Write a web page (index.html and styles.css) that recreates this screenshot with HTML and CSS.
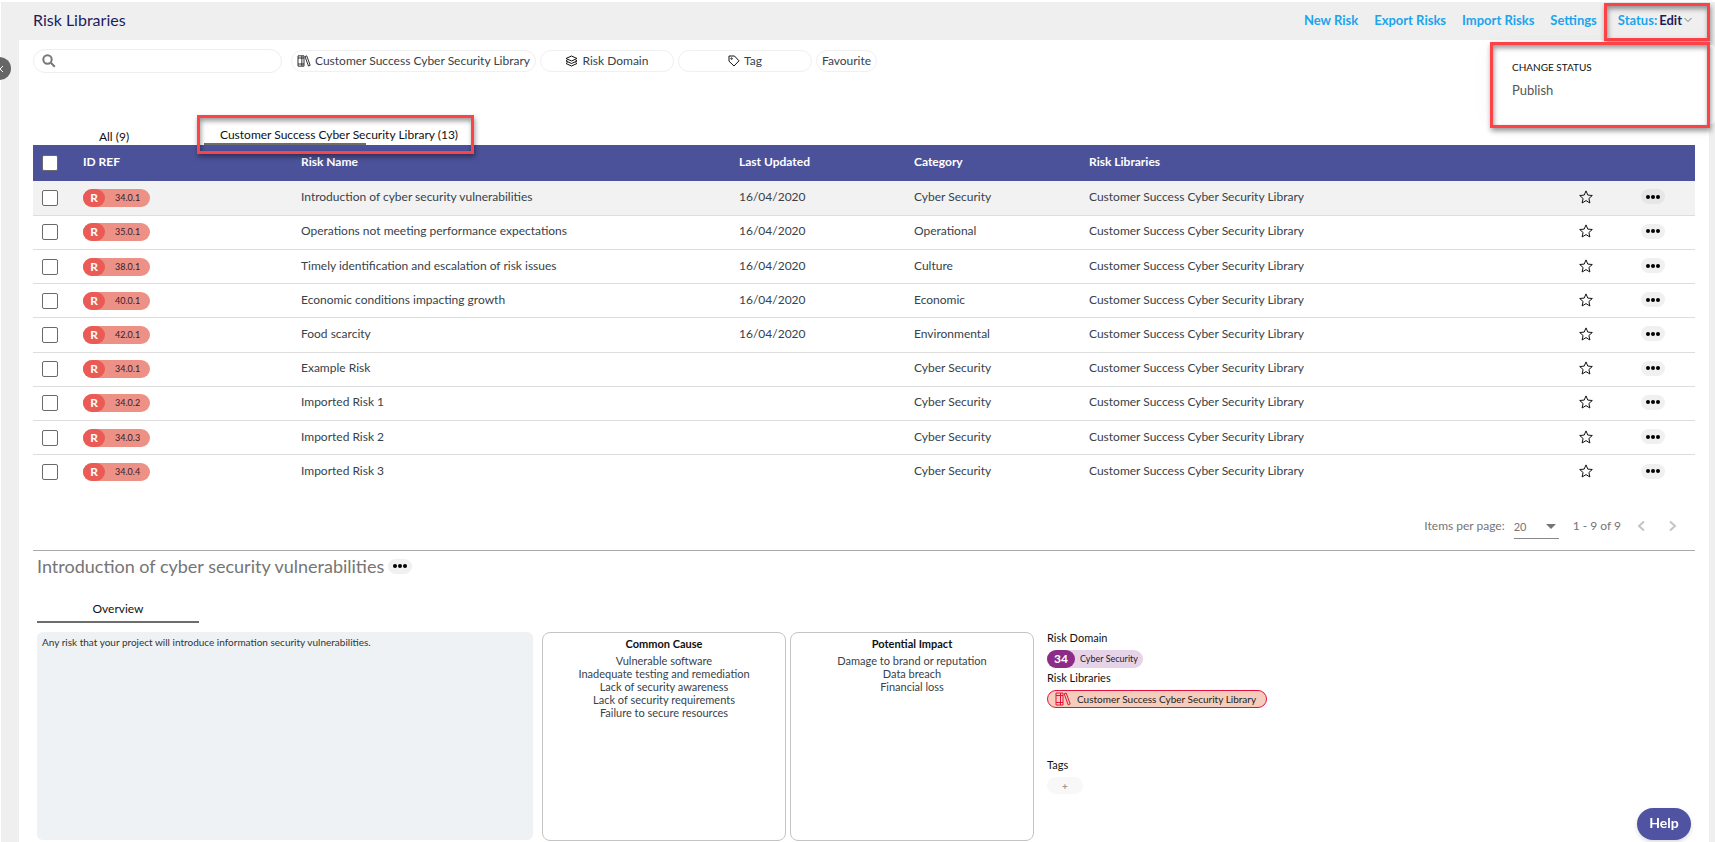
FILE: index.html
```
<!DOCTYPE html>
<html lang="en">
<head>
    <meta charset="UTF-8">
    <meta name="viewport" content="width=device-width, initial-scale=1.0">
    <title>Risk Libraries</title>
    <link rel="stylesheet" href="styles.css">
</head>
<body>
    <!-- shared icons -->
    <svg class="sprite" aria-hidden="true">
        <symbol id="icon-books" viewBox="0 0 16 14">
            <path d="M1 1h7v12H1zM5.5 1v12M1 3.5h7M1 10.5h7M9.2 1.8l2-.8 4 11-2 .9z" />
        </symbol>
        <symbol id="icon-star" viewBox="0 0 14 14">
            <path d="M7 .9l1.8 4.2 4.5.4-3.4 3 1 4.5L7 10.6 3.1 13l1-4.5-3.4-3 4.5-.4z" />
        </symbol>
        <symbol id="icon-dots" viewBox="0 0 14 4">
            <circle cx="2" cy="2" r="2" /><circle cx="7" cy="2" r="2" /><circle cx="12" cy="2" r="2" />
        </symbol>
    </svg>

    <button class="collapse-button" aria-label="Collapse menu">
        <svg width="6" height="8" viewBox="0 0 6 8"><path d="M5 1L2 4l3 3" /></svg>
    </button>

    <header class="topbar">
        <h1>Risk Libraries</h1>
        <nav class="actions">
            <a href="#">New Risk</a>
            <a href="#">Export Risks</a>
            <a href="#">Import Risks</a>
            <a href="#">Settings</a>
            <div class="status">
                <button class="status-button">Status: <span>Edit</span>
                    <svg width="8" height="6" viewBox="0 0 8 6"><path d="M.5 1L4 4.500 7.500 1" /></svg>
                </button>
                <div class="status-highlight"></div>
                <div class="status-menu">
                    <h2>Change status</h2>
                    <button>Publish</button>
                </div>
                <div class="menu-highlight"></div>
            </div>
        </nav>
    </header>

    <main class="page">
        <div class="filters">
            <label class="search">
                <svg width="14" height="14" viewBox="0 0 14 14"><circle cx="5.500" cy="5.500" r="4.200" /><path d="M8.800 8.800l4 4" /></svg>
                <input type="text" aria-label="Search">
            </label>
            <button class="chip"><svg class="line-icon" width="14" height="12"><use href="#icon-books" /></svg>Customer Success Cyber Security Library</button>
            <button class="chip chip-wide">
                <svg class="line-icon" width="13" height="12" viewBox="0 0 13 12"><path d="M6.500 1L12 3.500 6.500 6 1 3.500zM2.500 5L1 6l5.500 2.500L12 6l-1.500-1M2.500 7.500L1 8.500 6.500 11 12 8.500l-1.500-1" /></svg>Risk Domain
            </button>
            <button class="chip chip-wide">
                <svg class="line-icon" width="12" height="12" viewBox="0 0 12 12"><path d="M1 1h5.500L11 5.800 6 11 1 6.200z" /><circle cx="3.600" cy="3.600" r=".7" /></svg>Tag
            </button>
            <button class="chip">Favourite</button>
        </div>

        <div class="tabs">
            <button class="tab">All (9)</button>
            <button class="tab tab-active">Customer Success Cyber Security Library (13)<span class="tab-highlight"></span></button>
        </div>

        <table class="risks">
            <colgroup>
                <col class="col-check">
                <col class="col-id">
                <col class="col-name">
                <col class="col-date">
                <col class="col-date">
                <col>
                <col class="col-star">
                <col class="col-menu">
            </colgroup>
            <thead>
                <tr>
                    <th><input type="checkbox" aria-label="Select all"></th>
                    <th>ID REF</th>
                    <th>Risk Name</th>
                    <th>Last Updated</th>
                    <th>Category</th>
                    <th>Risk Libraries</th>
                    <th></th>
                    <th></th>
                </tr>
            </thead>
            <tbody id="riskRows"></tbody>
        </table>

        <div class="paginator">
            <label for="pageSize">Items per page:</label>
            <div class="page-size">
                <select id="pageSize"><option>20</option></select>
            </div>
            <span>1 - 9 of 9</span>
            <button aria-label="Previous page"><svg width="8" height="12" viewBox="0 0 8 12"><path d="M7 1.500L2 6l5 4.500" /></svg></button>
            <button aria-label="Next page"><svg width="8" height="12" viewBox="0 0 8 12"><path d="M1 1.500L6 6l-5 4.500" /></svg></button>
        </div>

        <section class="detail">
            <div class="detail-title">
                <h2>Introduction of cyber security vulnerabilities</h2>
                <button class="dots" aria-label="More"><svg width="14" height="4"><use href="#icon-dots" /></svg></button>
            </div>
            <button class="overview-tab">Overview</button>
            <div class="panels">
                <div class="description">Any risk that your project will introduce information security vulnerabilities.</div>
                <div class="panel">
                    <h3>Common Cause</h3>
                    <ul>
                        <li>Vulnerable software</li>
                        <li>Inadequate testing and remediation</li>
                        <li>Lack of security awareness</li>
                        <li>Lack of security requirements</li>
                        <li>Failure to secure resources</li>
                    </ul>
                </div>
                <div class="panel">
                    <h3>Potential Impact</h3>
                    <ul>
                        <li>Damage to brand or reputation</li>
                        <li>Data breach</li>
                        <li>Financial loss</li>
                    </ul>
                </div>
                <div class="meta">
                    <h4>Risk Domain</h4>
                    <div class="domain"><b>34</b>Cyber Security</div>
                    <h4>Risk Libraries</h4>
                    <div class="library"><svg class="line-icon" width="16" height="14"><use href="#icon-books" /></svg>Customer Success Cyber Security Library</div>
                    <h4 class="tags-title">Tags</h4>
                    <button class="add-tag" aria-label="Add tag">+</button>
                </div>
            </div>
        </section>
    </main>

    <button class="help-button">Help</button>

    <script>
        const library = 'Customer Success Cyber Security Library';
        const risks = [
            ['34.0.1', 'Introduction of cyber security vulnerabilities', '16/04/2020', 'Cyber Security'],
            ['35.0.1', 'Operations not meeting performance expectations', '16/04/2020', 'Operational'],
            ['38.0.1', 'Timely identification and escalation of risk issues', '16/04/2020', 'Culture'],
            ['40.0.1', 'Economic conditions impacting growth', '16/04/2020', 'Economic'],
            ['42.0.1', 'Food scarcity', '16/04/2020', 'Environmental'],
            ['34.0.1', 'Example Risk', '', 'Cyber Security'],
            ['34.0.2', 'Imported Risk 1', '', 'Cyber Security'],
            ['34.0.3', 'Imported Risk 2', '', 'Cyber Security'],
            ['34.0.4', 'Imported Risk 3', '', 'Cyber Security']
        ];

        document.getElementById('riskRows').innerHTML = risks.map(([id, name, updated, category]) => `
            <tr>
                <td><input type="checkbox" aria-label="Select ${name}"></td>
                <td><span class="risk-id"><b>R</b>${id}</span></td>
                <td>${name}</td>
                <td>${updated}</td>
                <td>${category}</td>
                <td>${library}</td>
                <td><button class="star" aria-label="Favourite"><svg class="line-icon" width="14" height="14"><use href="#icon-star" /></svg></button></td>
                <td><button class="dots" aria-label="More"><svg width="14" height="4"><use href="#icon-dots" /></svg></button></td>
            </tr>`).join('');
    </script>
</body>
</html>
```

FILE: styles.css
```
* {
    box-sizing: border-box;
}
body {
    margin: 0;
    padding: 2px 6px 0 19px;
    min-height: 100vh;
    background: linear-gradient(#fff, #fff) 0 0 / 100% 2px no-repeat, linear-gradient(#fff, #fff) 0 0 / 1px 100% no-repeat, #efefef;
    font-family: Lato, sans-serif;
    font-size: 12px;
    line-height: 16px;
    color: #37424a;
    display: flex;
    flex-direction: column;
}
h1, h2, h3, h4, ul {
    margin: 0;
    padding: 0;
    font-weight: 400;
    list-style: none;
}
button, input, select {
    font: inherit;
    color: inherit;
    margin: 0;
    padding: 0;
    border: none;
    background: none;
}
button {
    cursor: pointer;
}
svg {
    display: block;
    flex: none;
}
.sprite {
    position: absolute;
    width: 0;
    height: 0;
}
.line-icon {
    fill: none;
    stroke: #111;
    stroke-width: 1;
}
.collapse-button {
    position: absolute;
    left: -12px;
    top: 57px;
    width: 23px;
    height: 23px;
    border-radius: 50%;
    background: #666;
    padding-left: 10px;
}
.collapse-button path {
    fill: none;
    stroke: #fff;
}

/* top bar */
.topbar {
    height: 38px;
    padding: 0 17px 2px 14px;
    display: flex;
    align-items: center;
    justify-content: space-between;
}
.topbar h1 {
    font-size: 16px;
    color: #1f1c5c;
}
.actions {
    display: flex;
    gap: 16px;
    font-size: 13px;
    font-weight: 700;
}
.actions a, .status-button {
    color: #1ba5ec;
    text-decoration: none;
}
.status {
    position: relative;
    margin-left: 5px;
}
.status-button {
    display: flex;
    align-items: center;
    gap: 2px;
    font-weight: 700;
}
.status-button span {
    color: #1f1c5c;
}
.status-button svg {
    fill: none;
    stroke: #777;
}
.status-highlight, .menu-highlight, .tab-highlight {
    position: absolute;
    border: 3px solid #fd4347;
    box-shadow: 1px 3px 5px rgba(0, 0, 0, 0.4), inset 1px 3px 5px rgba(0, 0, 0, 0.4);
    pointer-events: none;
}
.status-highlight {
    top: -9px;
    right: -18px;
    width: 106px;
    height: 38px;
}
.status-menu {
    position: absolute;
    top: 33px;
    right: -23px;
    width: 224px;
    height: 79px;
    padding: 15px 21px;
    background: #fff;
    border-radius: 4px;
    box-shadow: 0 0 24px rgba(0, 0, 0, 0.04);
    font-weight: 400;
}
.status-menu h2 {
    font-size: 10px;
    line-height: 15px;
    text-transform: uppercase;
    color: #111;
}
.status-menu button {
    margin-top: 7px;
    font-size: 13px;
    color: #555;
}
.menu-highlight {
    top: 30px;
    right: -18px;
    width: 220px;
    height: 86px;
}

/* filters */
.page {
    flex: 1;
    background: #fff;
    padding: 9px 14px 1px;
}
.filters {
    display: flex;
    align-items: center;
    gap: 4px;
}
.search {
    display: flex;
    align-items: center;
    width: 249px;
    height: 24px;
    margin-right: 5px;
    padding-left: 8px;
    border: 1px solid #eee;
    border-radius: 12px;
}
.search svg {
    fill: none;
    stroke: #777;
    stroke-width: 2;
}
.search input {
    flex: 1;
    min-width: 0;
    outline: none;
}
.chip {
    display: flex;
    align-items: center;
    justify-content: center;
    gap: 4px;
    height: 22px;
    padding: 0 5px;
    border: 1px solid #f0f0f0;
    border-radius: 11px;
}
.chip-wide {
    width: 134px;
}

/* tabs */
.tabs {
    display: flex;
    gap: 9px;
    margin-top: 52px;
}
.tab {
    position: relative;
    width: 162px;
    height: 20px;
    padding-top: 3px;
    color: #111;
    white-space: nowrap;
}
.tab-active {
    padding: 1px 0 0 16px;
    text-align: left;
    border-bottom: 2px solid #6d6d6d;
}
.tab-highlight {
    left: -7px;
    top: -10px;
    width: 277px;
    height: 39px;
}

/* table */
.risks {
    width: 100%;
    height: 344px;
    table-layout: fixed;
    border-collapse: collapse;
}
.col-check {
    width: 50px;
}
.col-id {
    width: 218px;
}
.col-name {
    width: 438px;
}
.col-date {
    width: 175px;
}
.col-star {
    width: 62px;
}
.col-menu {
    width: 54px;
}
.risks th, .risks td {
    padding: 0;
    text-align: left;
}
.risks th {
    height: 36px;
    padding-bottom: 3px;
    background: #4c5299;
    color: #fff;
    font-weight: 700;
}
.risks td {
    height: 34px;
    padding-bottom: 2px;
    border-top: 1px solid #dedede;
}
.risks tbody tr:first-child {
    background: #f2f2f2;
}
.risks tbody tr:first-child td {
    border-top: none;
}
.risks input {
    display: block;
    appearance: none;
    width: 16px;
    height: 16px;
    margin: 2px 0 0 9px;
    border: 1px solid #6a6a6a;
    border-radius: 2px;
    background: #fff;
}
.risk-id {
    display: flex;
    align-items: center;
    width: 67px;
    height: 18px;
    margin-top: 2px;
    border-radius: 9px;
    background: #ed9186;
    font-size: 9px;
    color: #33202a;
}
.risk-id b {
    width: 22px;
    height: 18px;
    margin-right: 10px;
    border-radius: 9px;
    background: #e95b54;
    color: #fff;
    font-size: 12px;
    line-height: 18px;
    text-align: center;
}
.star {
    display: block;
}
.dots {
    display: grid;
    place-items: center;
    width: 24px;
    height: 15px;
    border-radius: 8px;
    background: #f0f0f0;
}
.risks tr:first-child .dots {
    background: #e6e6e6;
}

/* paginator */
.paginator {
    display: flex;
    align-items: center;
    justify-content: flex-end;
    height: 62px;
    padding: 13px 18px 0 0;
    border-bottom: 1px solid #aaa;
    color: #757575;
}
.page-size {
    position: relative;
    margin: 3px 14px 0 9px;
    border-bottom: 1px solid #888;
}
.page-size select {
    display: block;
    appearance: none;
    width: 45px;
    height: 22px;
    font-size: 11px;
}
.page-size::after {
    content: "";
    position: absolute;
    right: 3px;
    top: 8px;
    border: 5px solid transparent;
    border-top-color: #757575;
    border-bottom: none;
}
.paginator button {
    margin-left: 16px;
}
.paginator button + button {
    margin-left: 24px;
}
.paginator path {
    fill: none;
    stroke: #c4c4c4;
    stroke-width: 2;
}

/* detail */
.detail {
    padding: 3px 0 0 4px;
}
.detail-title {
    display: flex;
    align-items: center;
    gap: 4px;
}
.detail-title h2 {
    font-size: 18px;
    line-height: 24px;
    color: #757575;
}
.overview-tab {
    display: block;
    width: 162px;
    height: 24px;
    margin-top: 21px;
    padding-bottom: 3px;
    border-bottom: 2px solid #6d6d6d;
    color: #111;
}
.panels {
    display: flex;
    margin-top: 9px;
}
.description {
    width: 496px;
    height: 208px;
    margin-right: 9px;
    padding: 2px 5px;
    border-radius: 6px;
    background: #eef2f5;
    font-size: 10px;
    color: #333;
}
.panel {
    width: 244px;
    height: 209px;
    margin-right: 4px;
    border: 1px solid #c4c4c4;
    border-radius: 8px;
    padding-top: 3px;
    text-align: center;
    font-size: 11px;
    line-height: 13px;
}
.panel h3 {
    margin-bottom: 2px;
    font-size: 11px;
    line-height: 16px;
    font-weight: 700;
    color: #111;
}
.meta {
    margin-left: 9px;
    font-size: 10px;
}
.meta h4 {
    font-size: 11px;
    line-height: 12px;
    color: #111;
}
.domain, .library {
    display: flex;
    align-items: center;
    width: max-content;
    height: 18px;
    margin: 6px 0 4px;
    border-radius: 9px;
    color: #222;
}
.domain {
    padding-right: 5px;
    background: #e6d3e8;
    font-size: 9px;
}
.domain b {
    width: 28px;
    height: 18px;
    margin-right: 5px;
    border-radius: 9px;
    background: #8c2c86;
    color: #fff;
    font-size: 12px;
    line-height: 18px;
    text-align: center;
}
.library {
    gap: 6px;
    padding: 0 10px 0 7px;
    border: 1px solid #e4123b;
    background: #f6cdbc;
}
.library .line-icon {
    stroke: #e4123b;
}
.meta .tags-title {
    margin-top: 51px;
}
.add-tag {
    width: 36px;
    height: 17px;
    margin-top: 6px;
    border-radius: 9px;
    background: #f8f8f8;
    color: #999;
    font-weight: 700;
}
.help-button {
    position: fixed;
    right: 24px;
    bottom: 2px;
    width: 54px;
    height: 32px;
    padding-bottom: 3px;
    border-radius: 16px;
    background: #4f53a2;
    box-shadow: 0 2px 4px rgba(0, 0, 0, 0.15);
    color: #fff;
    font-size: 14px;
    font-weight: 700;
}
```
